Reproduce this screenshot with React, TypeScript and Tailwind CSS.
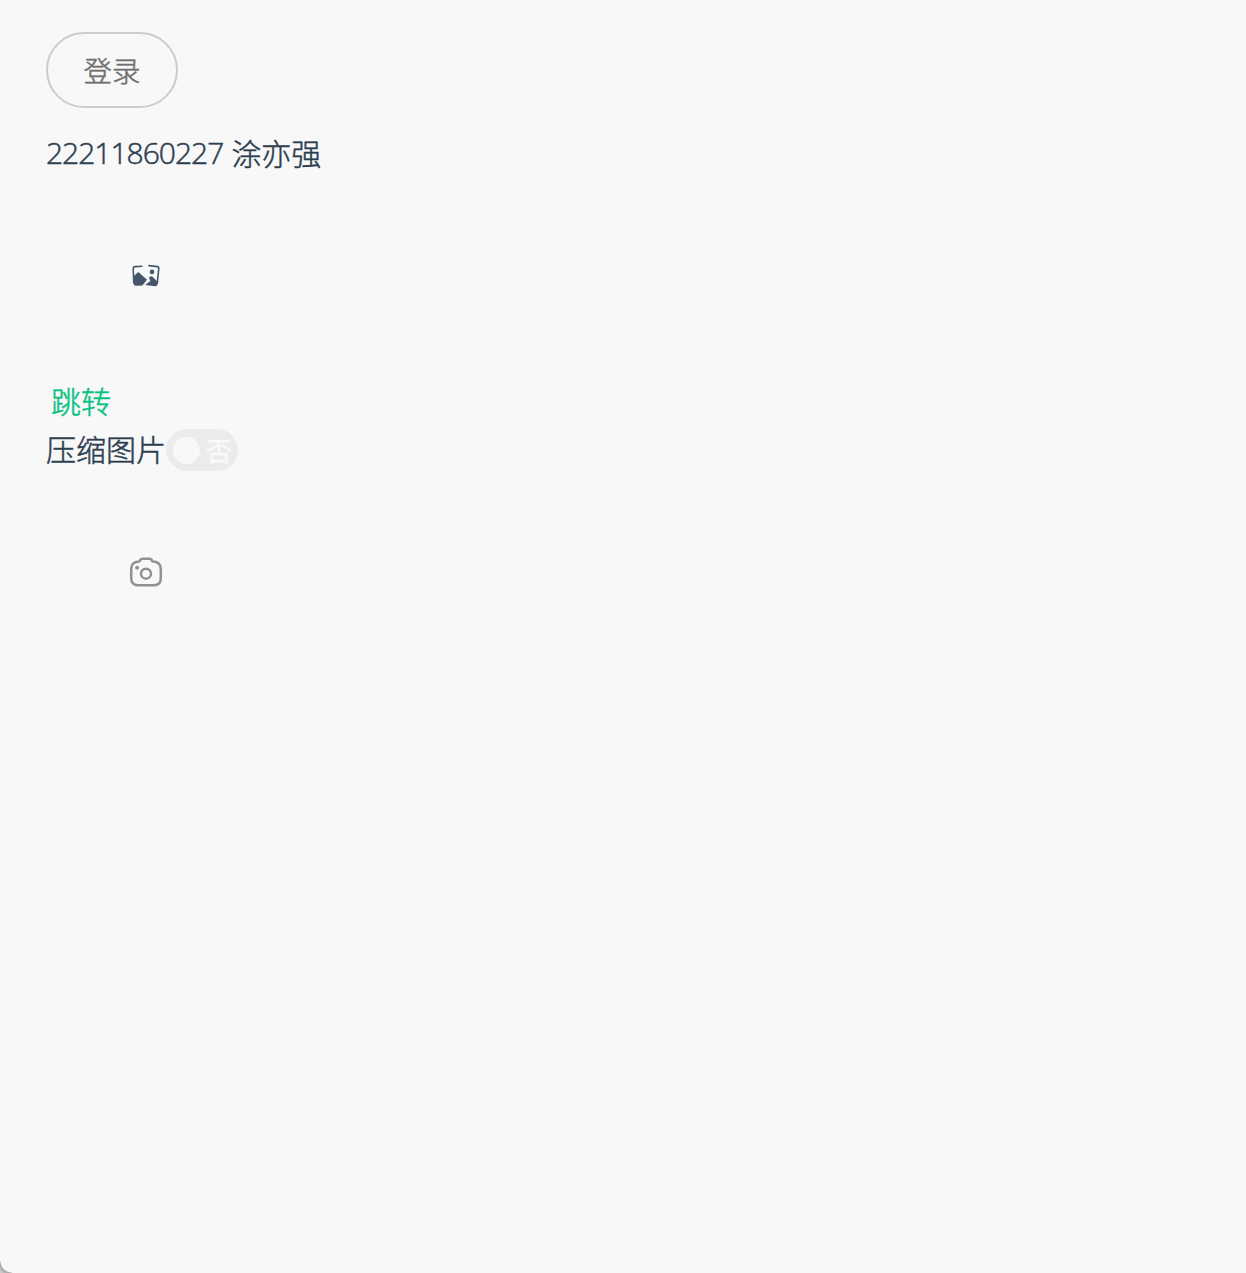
import React from "react";

function PicturesIcon() {
  return (
    <svg width="28" height="24" viewBox="0 0 28 24" fill="none" className="shrink-0">
      <path d="M10.4 2.2 3 2.6Q1.2 2.7 1.2 4.4L1.8 19.5" stroke="#46566a" strokeWidth="1.6" />
      <path d="M1.5 12.2 6.3 8 15 15.7 10.4 21.6 3.6 21.8Q1.8 21.8 1.7 19.8Z" fill="#46566a" />
      <path d="M16.4 1.6 25.5 2.6Q26.9 2.9 26.8 4.3L25.2 20" stroke="#46566a" strokeWidth="1.6" />
      <circle cx="20" cy="7.9" r="2.3" fill="#46566a" />
      <path d="M17 13.7Q18.8 11.2 20.8 12.9L25.8 18.1 25.3 20.6Q25 22.5 23.2 22.2L13 21 18.4 16.9Z" fill="#46566a" />
    </svg>
  );
}

function CameraIcon() {
  return (
    <svg width="34" height="32" viewBox="0 0 34 32" fill="none" stroke="#8f9192" strokeWidth="2.5" className="shrink-0">
      <path d="M10 5.6Q10.9 5.4 11.1 4.5Q11.6 2.7 13.5 2.7H20.5Q22.4 2.7 22.9 4.5Q23.2 5.4 24.1 5.6Q31.8 6.1 31.8 13V22Q31.8 29.2 25 29.2H9Q2.2 29.2 2.2 22V13Q2.2 6.1 10 5.6Z" strokeLinejoin="round" />
      <circle cx="17" cy="17.7" r="5" />
      <circle cx="8.1" cy="11.8" r="2" fill="#8f9192" stroke="none" />
    </svg>
  );
}

export default function App() {
  return (
    <div className="relative flex h-[1273px] w-[1246px] flex-col items-start overflow-hidden bg-[#f8f8f8] pt-8 pl-[46px] font-['Noto_Sans_CJK_SC',sans-serif] text-[30px] leading-[48px] font-light text-[#2c3e50] [-webkit-text-stroke:0.5px_currentColor]">
      <button className="flex h-[76px] w-[132px] items-center justify-center rounded-full border-2 border-[#cccccc] text-[28.5px] text-[#707070]">
        登录
      </button>
      <p className="mt-5 flex h-12 gap-2 whitespace-nowrap">
        <span className="pt-px font-['Open_Sans',sans-serif] tracking-[-1px]">22211860227</span>
        <span>涂亦强</span>
      </p>
      <div className="flex size-[200px] items-center justify-center bg-[#f7f9f8]">
        <PicturesIcon />
      </div>
      <a className="pl-[5px] text-[#07c180]">跳转</a>
      <div className="flex h-12 items-center">
        <span>压缩图片</span>
        <span role="switch" aria-checked="false" className="mt-1 flex h-[42px] w-[72px] items-center rounded-full bg-[#ebebeb] pl-[7px]">
          <span className="size-[27px] rounded-full bg-[#f8f8f8]" />
          <span className="ml-[6px] text-[26px] leading-[42px] font-medium text-[#f8f8f8]">否</span>
        </span>
      </div>
      <div className="flex size-[200px] items-center justify-center bg-[#f7f9f8]">
        <CameraIcon />
      </div>
      <div className="absolute bottom-0 left-0 size-3 bg-[radial-gradient(circle_at_100%_0%,transparent_11px,#aaaaaa_12px,#cccccc_16px)]" />
    </div>
  );
}
